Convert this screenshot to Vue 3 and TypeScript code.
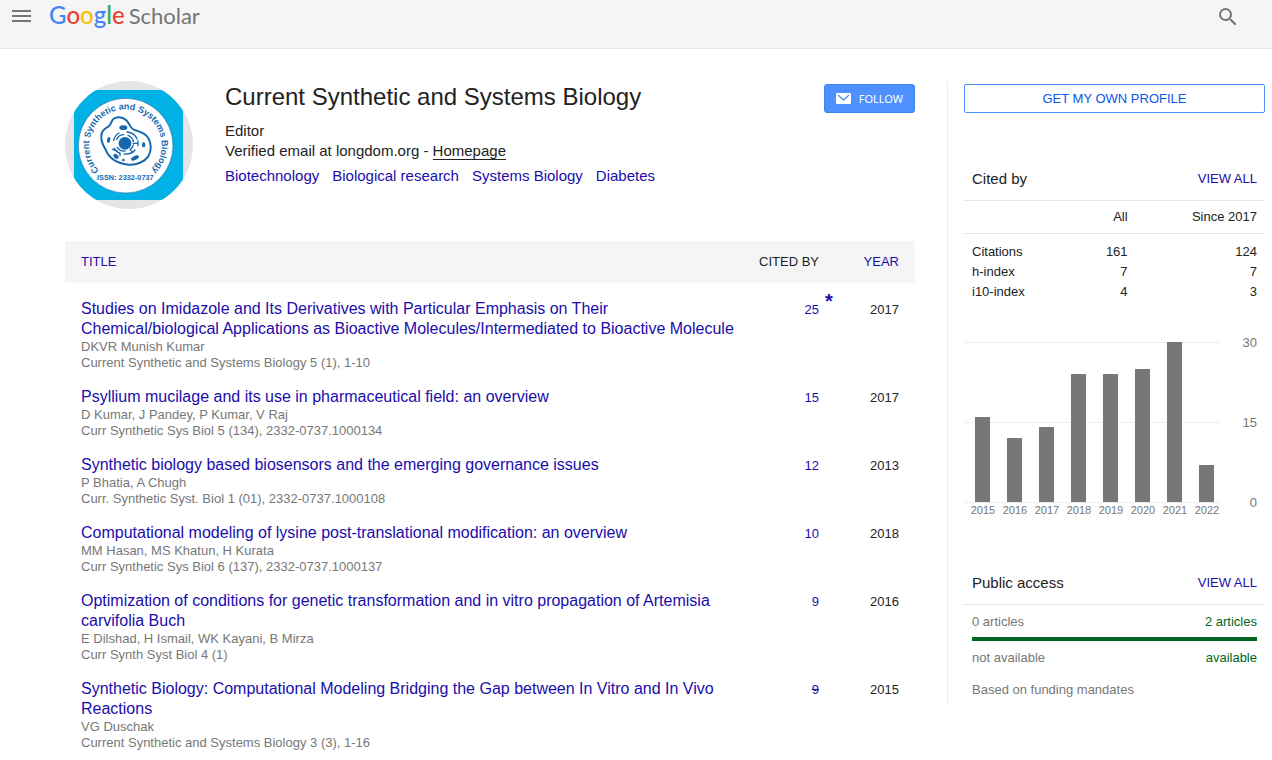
<script setup lang="ts">
interface Article {
  title: string
  authors: string
  venue: string
  cites: number
  year: number
  merged?: boolean
  struck?: boolean
}

const interests: string[] = ['Biotechnology', 'Biological research', 'Systems Biology', 'Diabetes']

const articles: Article[] = [
  {
    title:
      'Studies on Imidazole and Its Derivatives with Particular Emphasis on Their Chemical/biological Applications as Bioactive Molecules/Intermediated to Bioactive Molecule',
    authors: 'DKVR Munish Kumar',
    venue: 'Current Synthetic and Systems Biology 5 (1), 1-10',
    cites: 25,
    year: 2017,
    merged: true,
  },
  {
    title: 'Psyllium mucilage and its use in pharmaceutical field: an overview',
    authors: 'D Kumar, J Pandey, P Kumar, V Raj',
    venue: 'Curr Synthetic Sys Biol 5 (134), 2332-0737.1000134',
    cites: 15,
    year: 2017,
  },
  {
    title: 'Synthetic biology based biosensors and the emerging governance issues',
    authors: 'P Bhatia, A Chugh',
    venue: 'Curr. Synthetic Syst. Biol 1 (01), 2332-0737.1000108',
    cites: 12,
    year: 2013,
  },
  {
    title: 'Computational modeling of lysine post-translational modification: an overview',
    authors: 'MM Hasan, MS Khatun, H Kurata',
    venue: 'Curr Synthetic Sys Biol 6 (137), 2332-0737.1000137',
    cites: 10,
    year: 2018,
  },
  {
    title:
      'Optimization of conditions for genetic transformation and in vitro propagation of Artemisia carvifolia Buch',
    authors: 'E Dilshad, H Ismail, WK Kayani, B Mirza',
    venue: 'Curr Synth Syst Biol 4 (1)',
    cites: 9,
    year: 2016,
  },
  {
    title:
      'Synthetic Biology: Computational Modeling Bridging the Gap between In Vitro and In Vivo Reactions',
    authors: 'VG Duschak',
    venue: 'Current Synthetic and Systems Biology 3 (3), 1-16',
    cites: 9,
    year: 2015,
    struck: true,
  },
]

const metrics = [
  { name: 'Citations', all: 161, recent: 124 },
  { name: 'h-index', all: 7, recent: 7 },
  { name: 'i10-index', all: 4, recent: 3 },
]

const chartMax = 30
const ticks = [30, 15, 0]
const citesPerYear = [
  { year: 2015, count: 16 },
  { year: 2016, count: 12 },
  { year: 2017, count: 14 },
  { year: 2018, count: 24 },
  { year: 2019, count: 24 },
  { year: 2020, count: 25 },
  { year: 2021, count: 30 },
  { year: 2022, count: 7 },
]

const barHeight = (count: number): string => `${(count / chartMax) * 100}%`
</script>

<template>
  <div class="page">
    <header class="topbar">
      <button class="icon-btn" type="button" aria-label="Menu">
        <svg width="24" height="24" viewBox="0 0 24 24">
          <path d="M3 6h19v2H3zM3 11h19v2H3zM3 16h19v2H3z" fill="#757575" />
        </svg>
      </button>
      <a class="logo" href="#" aria-label="Google Scholar">
        <span class="google"
          ><span class="b">G</span><span class="r">o</span><span class="y">o</span><span class="b">g</span
          ><span class="g">l</span><span class="r">e</span></span
        >
        <span class="scholar">Scholar</span>
      </a>
      <button class="icon-btn search" type="button" aria-label="Search">
        <svg width="24" height="24" viewBox="0 0 24 24">
          <path
            fill="#757575"
            d="M15.500 14h-.79l-.28-.27A6.471 6.471 0 0 0 16 9.500 6.500 6.500 0 1 0 9.500 16c1.610 0 3.090-.59 4.230-1.570l.27.28v.79l5 4.990L20.490 19l-4.990-5zm-6 0C7.010 14 5 11.990 5 9.500S7.010 5 9.500 5 14 7.010 14 9.500 11.990 14 9.500 14z"
          />
        </svg>
      </button>
    </header>

    <div class="columns">
      <main class="main">
        <section class="profile">
          <svg class="avatar" width="128" height="128" viewBox="0 0 384 384" role="img" aria-label="Journal seal">
            <defs>
              <clipPath id="disc"><circle cx="192" cy="192" r="192" /></clipPath>
              <path id="ring" d="M181 303A109 109 0 0 1 181 85A109 109 0 0 1 181 303" />
            </defs>
            <g clip-path="url(#disc)">
              <rect width="384" height="384" fill="#e5e5e5" />
              <rect x="27" y="27" width="327" height="330" fill="#00b1e6" />
            </g>
            <circle cx="182" cy="194" r="142" fill="#fff" stroke="#1e6fa8" stroke-width="2" />
            <text class="seal-name" text-anchor="middle">
              <textPath href="#ring" startOffset="50%">Current Synthetic and Systems Biology</textPath>
            </text>
            <text class="seal-issn" x="181" y="298" text-anchor="middle">ISSN: 2332-0737</text>
            <g fill="none" stroke="#1768ae" stroke-linecap="round">
              <path
                stroke-width="6"
                d="M148 112C138 116 142 127 130 137C116 144 108 153 109 168C108 186 117 195 123 208C133 233 158 247 190 251C215 253 239 242 250 226C260 210 259 187 251 173C243 158 226 152 211 148C194 143 194 127 184 118C174 109 160 107 148 112Z"
              />
              <g stroke-width="4">
                <path d="M146 178C149 166 154 160 162 156M186 153C202 155 212 163 216 174M148 202C152 210 157 214 164 216M178 219C192 220 204 215 210 207M155 175C160 165 168 161 176 161M189 163C198 167 204 173 205 182M157 199C163 208 172 211 180 210M196 204C201 201 204 197 205 192M205 187H219M219 180V194M142 205L156 209M165 216V224M195 205L201 212" />
              </g>
            </g>
            <g fill="#1768ae">
              <circle cx="180" cy="187" r="19" />
              <ellipse cx="175" cy="140" rx="12" ry="7" />
              <ellipse cx="131" cy="177" rx="5" ry="9" transform="rotate(10 131 177)" />
              <ellipse cx="236" cy="191" rx="5" ry="8" />
              <ellipse cx="153" cy="226" rx="9" ry="6" transform="rotate(38 153 226)" />
              <ellipse cx="210" cy="231" rx="13" ry="6" transform="rotate(-28 210 231)" />
              <circle cx="175" cy="237" r="4" />
            </g>
          </svg>
          <div class="about">
            <h1>Current Synthetic and Systems Biology</h1>
            <p>Editor</p>
            <p>Verified email at longdom.org - <a class="home" href="#">Homepage</a></p>
            <nav class="interests" aria-label="Interests">
              <a v-for="interest in interests" :key="interest" href="#">{{ interest }}</a>
            </nav>
          </div>
          <button class="follow" type="button">
            <svg width="15" height="11" viewBox="0 0 15 11">
              <rect width="15" height="11" rx="1" fill="#fff" />
              <path d="M2 2L7.500 7L13 2" fill="none" stroke="#4d90fe" stroke-width="1.300" />
            </svg>
            <span>FOLLOW</span>
          </button>
        </section>

        <table class="articles">
          <thead>
            <tr>
              <th class="c-title" scope="col"><a href="#">TITLE</a></th>
              <th class="c-cited" scope="col">CITED BY</th>
              <th class="c-year" scope="col"><a href="#">YEAR</a></th>
            </tr>
          </thead>
          <tbody>
            <tr v-for="article in articles" :key="article.title">
              <td class="c-title">
                <a class="title" href="#">{{ article.title }}</a>
                <div class="meta">{{ article.authors }}</div>
                <div class="meta">{{ article.venue }}</div>
              </td>
              <td class="c-cited">
                <span class="cite">
                  <a href="#" :class="{ struck: article.struck }">{{ article.cites }}</a>
                  <a v-if="article.merged" class="star" href="#">*</a>
                </span>
              </td>
              <td class="c-year">{{ article.year }}</td>
            </tr>
          </tbody>
        </table>
      </main>

      <aside class="side">
        <button class="own" type="button">GET MY OWN PROFILE</button>

        <section class="cited">
          <div class="side-head">
            <h2>Cited by</h2>
            <a href="#">VIEW ALL</a>
          </div>
          <table class="metrics">
            <thead>
              <tr>
                <th></th>
                <th scope="col">All</th>
                <th scope="col">Since 2017</th>
              </tr>
            </thead>
            <tbody>
              <tr v-for="metric in metrics" :key="metric.name">
                <th scope="row">{{ metric.name }}</th>
                <td>{{ metric.all }}</td>
                <td>{{ metric.recent }}</td>
              </tr>
            </tbody>
          </table>

          <div class="chart">
            <div class="plot">
              <div class="bars">
                <div
                  v-for="entry in citesPerYear"
                  :key="entry.year"
                  class="bar"
                  :style="{ height: barHeight(entry.count) }"
                ></div>
              </div>
              <div class="years">
                <span v-for="entry in citesPerYear" :key="entry.year">{{ entry.year }}</span>
              </div>
            </div>
            <div class="ticks">
              <span v-for="tick in ticks" :key="tick">{{ tick }}</span>
            </div>
          </div>
        </section>

        <section class="access">
          <div class="side-head">
            <h2>Public access</h2>
            <a href="#">VIEW ALL</a>
          </div>
          <div class="access-body">
            <div class="pair"><span>0 articles</span><span class="open">2 articles</span></div>
            <div class="meter"></div>
            <div class="pair"><span>not available</span><span class="open">available</span></div>
            <p>Based on funding mandates</p>
          </div>
        </section>
      </aside>
    </div>
  </div>
</template>

<style>
body {
  background: #fff;
}
</style>

<style scoped>
.page {
  font-family: 'Liberation Sans', Arial, sans-serif;
  font-size: 13px;
  line-height: 16px;
  color: #222;
}
a {
  color: #1a0dab;
  text-decoration: none;
}
button {
  font: inherit;
  cursor: pointer;
}
h1,
h2,
p {
  margin: 0;
  font-weight: 400;
}
table {
  width: 100%;
  border-collapse: collapse;
}
th {
  font-weight: 400;
}

.topbar {
  display: flex;
  align-items: flex-start;
  height: 48px;
  padding: 0 32px 0 9px;
  background: #f5f5f5;
  border-bottom: 1px solid #e5e5e5;
}
.icon-btn {
  display: flex;
  padding: 4px 0 0;
  border: 0;
  background: none;
}
.search {
  margin-left: auto;
  padding-top: 5px;
}
.logo {
  display: flex;
  align-items: baseline;
  gap: 4px;
  margin-left: 16px;
  font-family: Lato, sans-serif;
  line-height: 30px;
}
.google {
  font-size: 24px;
  font-weight: 500;
}
.scholar {
  font-size: 22px;
  color: #757575;
}
.b {
  color: #4285f4;
}
.r {
  color: #ea4335;
}
.y {
  color: #fbbc05;
}
.g {
  color: #34a853;
}

.columns {
  display: flex;
  align-items: flex-start;
  gap: 32px;
  padding: 32px 7px 0 65px;
}
.main {
  flex: 1;
  min-width: 0;
}
.profile {
  display: flex;
  align-items: flex-start;
  gap: 32px;
  margin-bottom: 32px;
}
.avatar {
  flex: none;
}
.seal-name {
  font-size: 27px;
  font-weight: 700;
  fill: #1768ae;
}
.seal-issn {
  font-size: 22px;
  font-weight: 700;
  fill: #1768ae;
}
.about {
  flex: 1;
  font-size: 15px;
  line-height: 20px;
}
h1 {
  margin-bottom: 8px;
  font-size: 24px;
  line-height: 32px;
}
.home {
  color: #222;
  border-bottom: 1px solid #222;
}
.interests {
  display: flex;
  gap: 13px;
  margin-top: 5px;
}
.follow {
  display: flex;
  align-items: center;
  gap: 8px;
  height: 29px;
  margin-top: 3px;
  padding: 0 11px;
  border: 1px solid #3f83f0;
  border-radius: 3px;
  background: #4d90fe;
  color: #fff;
  font-family: 'Noto Sans', sans-serif;
  font-size: 11px;
}

.articles thead {
  background: #f5f5f5;
}
.articles thead th {
  padding-top: 13px;
  padding-bottom: 13px;
}
.articles tbody td {
  padding-top: 16px;
  padding-bottom: 0;
  vertical-align: top;
  line-height: 22px;
}
.articles .c-title {
  padding-left: 16px;
  padding-right: 0;
  text-align: left;
}
.articles .c-cited {
  width: 80px;
  padding-left: 0;
  padding-right: 16px;
  text-align: right;
}
.articles .c-year {
  width: 64px;
  padding-left: 0;
  padding-right: 16px;
  text-align: right;
}
.title {
  display: block;
  font-size: 16px;
  line-height: 20px;
}
.meta {
  color: #777;
  line-height: 16px;
}
.cite {
  position: relative;
}
.star {
  position: absolute;
  left: 100%;
  top: -12px;
  padding-left: 6px;
  font-size: 20px;
  font-weight: 700;
}
.struck {
  text-decoration: line-through;
}

.side {
  flex: 0 0 301px;
  padding: 3px 0 8px 16px;
  border-left: 1px solid #eee;
}
.own {
  display: block;
  width: 100%;
  height: 29px;
  padding: 0;
  border: 1px solid #4d90fe;
  border-radius: 2px;
  background: #fff;
  color: #0b57e8;
}
.cited {
  margin-top: 58px;
}
.side-head {
  display: flex;
  justify-content: space-between;
  align-items: center;
  padding: 0 8px 13px;
  border-bottom: 1px solid #e5e5e5;
}
h2 {
  font-size: 15px;
  line-height: 16px;
}
.metrics thead tr {
  border-bottom: 1px solid #e5e5e5;
}
.metrics thead th {
  padding-top: 8px;
  padding-bottom: 8px;
}
.metrics tbody::before {
  content: '';
  display: block;
  height: 8px;
}
.metrics th,
.metrics td {
  padding: 0 8px;
  line-height: 20px;
  text-align: right;
}
.metrics thead th {
  line-height: 16px;
}
.metrics th:first-child {
  width: 32%;
  text-align: left;
}
.metrics th:last-child {
  width: 43%;
}

.chart {
  display: flex;
  justify-content: space-between;
  margin-top: 40px;
  padding-right: 8px;
  color: #777;
}
.plot {
  width: 256px;
}
.bars {
  display: flex;
  align-items: flex-end;
  gap: 17px;
  height: 160px;
  padding-left: 11px;
  border-bottom: 1px solid #eee;
  background: linear-gradient(#eee 1px, transparent 1px) 0 0 / 100% 80px;
}
.bar {
  width: 15px;
  background: #777;
}
.years {
  display: flex;
  padding-left: 3px;
  font-size: 11px;
  line-height: 15px;
}
.years span {
  flex: 0 0 32px;
  text-align: center;
}
.ticks {
  display: flex;
  flex-direction: column;
  justify-content: space-between;
  height: 176px;
  margin-top: -7px;
  text-align: right;
}

.access {
  margin-top: 57px;
  color: #777;
}
.access h2 {
  color: #222;
}
.access-body {
  padding: 9px 8px 0;
}
.pair {
  display: flex;
  justify-content: space-between;
}
.open {
  color: #006621;
}
.meter {
  height: 4px;
  margin: 7px 0 9px;
  background: #006621;
}
.access-body p {
  margin-top: 16px;
}
</style>
